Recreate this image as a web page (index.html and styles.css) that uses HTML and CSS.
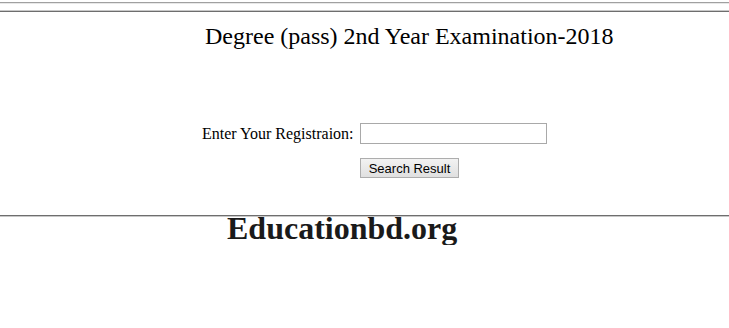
FILE: index.html
```html
<!DOCTYPE html>
<html>
<head>
<meta charset="utf-8">
<link rel="stylesheet" href="styles.css">
</head>
<body>
<div class="top-rule"></div>
<div class="panel">
  <h1 class="title">Degree (pass) 2nd Year Examination-2018</h1>
  <form class="form">
    <div class="row">
      <label class="label" for="reg">Enter Your Registraion:</label>
      <input class="field" id="reg" type="text">
    </div>
    <div class="row btn-row">
      <button class="btn" type="button">Search Result</button>
    </div>
  </form>
</div>
<div class="brand">Educationbd.org</div>
</body>
</html>
```
FILE: styles.css
```css
html, body {
  margin: 0;
  padding: 0;
  background: #ffffff;
}
body {
  font-family: "Liberation Serif", "Times New Roman", serif;
  color: #000;
}
.top-rule {
  height: 1px;
  margin-top: 2px;
  background: #a0a0a0;
  border-bottom: 1px solid #e8e8e8;
}
.panel {
  margin-top: 7px;
  height: 203px;
  border-top: 1px solid #6e6e6e;
  border-bottom: 1px solid #6e6e6e;
  box-shadow: 0 1px 0 #c8c8c8, 0 -1px 0 #c8c8c8;
}
.title {
  margin: 0;
  padding-top: 10px;
  padding-left: 205px;
  font-size: 24px;
  font-weight: normal;
  line-height: 28px;
}
.form {
  margin-top: 73px;
  padding-left: 202px;
}
.row {
  display: flex;
  align-items: center;
  gap: 5px;
}
.label {
  font-size: 16px;
  width: 153px;
}
.field {
  width: 187px;
  height: 21px;
  box-sizing: border-box;
  margin: 0;
  border: 1px solid #a9a9a9;
  padding: 1px 2px;
}
.btn-row {
  margin-top: 14px;
  padding-left: 158px;
}
.btn {
  font-family: "Liberation Sans", Arial, sans-serif;
  font-size: 13px;
  width: 99px;
  height: 20px;
  padding: 0;
  margin: 0;
  border: 1px solid #adadad;
  background: linear-gradient(#f2f2f2, #e0e0e0);
  color: #000;
}
.brand {
  margin-top: -5px;
  padding-left: 227px;
  font-size: 32px;
  font-weight: bold;
  line-height: 34px;
  color: #1a1a1a;
}
```
